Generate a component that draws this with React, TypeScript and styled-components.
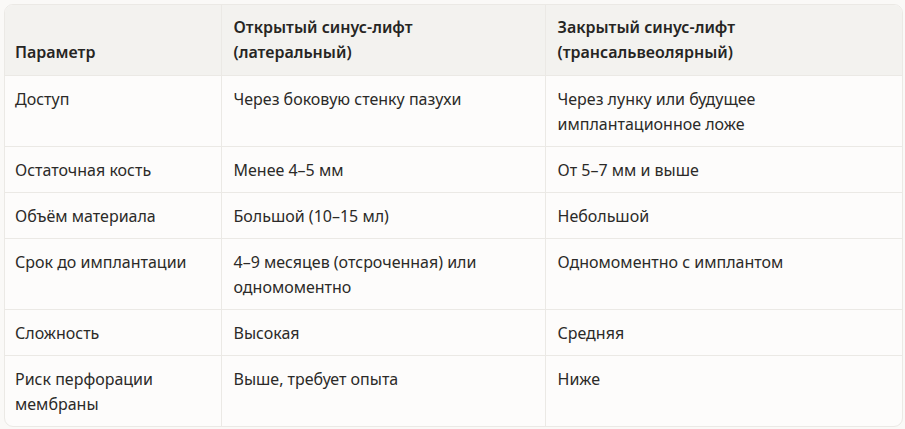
import styled, { createGlobalStyle } from 'styled-components';

const GlobalStyle = createGlobalStyle`
  html, body {
    margin: 0;
    padding: 0;
    background: #faf9f7;
  }
  body {
    font-family: 'Noto Sans', 'Open Sans', sans-serif;
    color: #2b2a28;
  }
`;

const rows: [string, string, string][] = [
  ['Доступ', 'Через боковую стенку пазухи', 'Через лунку или будущее имплантационное ложе'],
  ['Остаточная кость', 'Менее 4–5 мм', 'От 5–7 мм и выше'],
  ['Объём материала', 'Большой (10–15 мл)', 'Небольшой'],
  ['Срок до имплантации', '4–9 месяцев (отсроченная) или одномоментно', 'Одномоментно с имплантом'],
  ['Сложность', 'Высокая', 'Средняя'],
  ['Риск перфорации мембраны', 'Выше, требует опыта', 'Ниже'],
];

const App = () => {
  return (
    <>
      <GlobalStyle />
      <Page>
        <Frame>
          <Table>
            <colgroup>
              <Col $w={216} />
              <Col $w={324} />
              <Col />
            </colgroup>
            <thead>
              <tr>
                <Head>Параметр</Head>
                <Head>Открытый синус-лифт (латеральный)</Head>
                <Head>Закрытый синус-лифт (трансальвеолярный)</Head>
              </tr>
            </thead>
            <tbody>
              {rows.map((r) => (
                <Row key={r[0]}>
                  {r.map((cell, i) => (
                    <Cell key={i}>{cell}</Cell>
                  ))}
                </Row>
              ))}
            </tbody>
          </Table>
        </Frame>
      </Page>
    </>
  );
};

const Page = styled.div`
  padding: 4px 2px 3px 4px;
`;

const Frame = styled.div`
  border: 1px solid #ebe9e5;
  border-radius: 9px;
  overflow: hidden;
  background: #fdfcfb;
`;

const Table = styled.table`
  width: 100%;
  border-collapse: collapse;
  table-layout: fixed;
  font-size: 16px;
  line-height: 25px;
`;

const Col = styled.col<{ $w?: number }>`
  width: ${(p) => (p.$w ? `${p.$w}px` : 'auto')};
`;

const Head = styled.th`
  background: #f3f2ef;
  font-weight: 600;
  text-align: left;
  vertical-align: bottom;
  padding: 10px 12px;
  border-left: 1px solid #ebe9e5;
  border-bottom: 1px solid #ebe9e5;
  color: #262523;

  &:first-child {
    border-left: none;
    padding-left: 10px;
  }
`;

const Row = styled.tr`
  &:not(:last-child) td {
    border-bottom: 1px solid #ebe9e5;
  }
`;

const Cell = styled.td`
  padding: 11px 12px 9px;
  vertical-align: top;
  border-left: 1px solid #ebe9e5;

  &:first-child {
    border-left: none;
    padding-left: 10px;
  }
`;

export default App;
